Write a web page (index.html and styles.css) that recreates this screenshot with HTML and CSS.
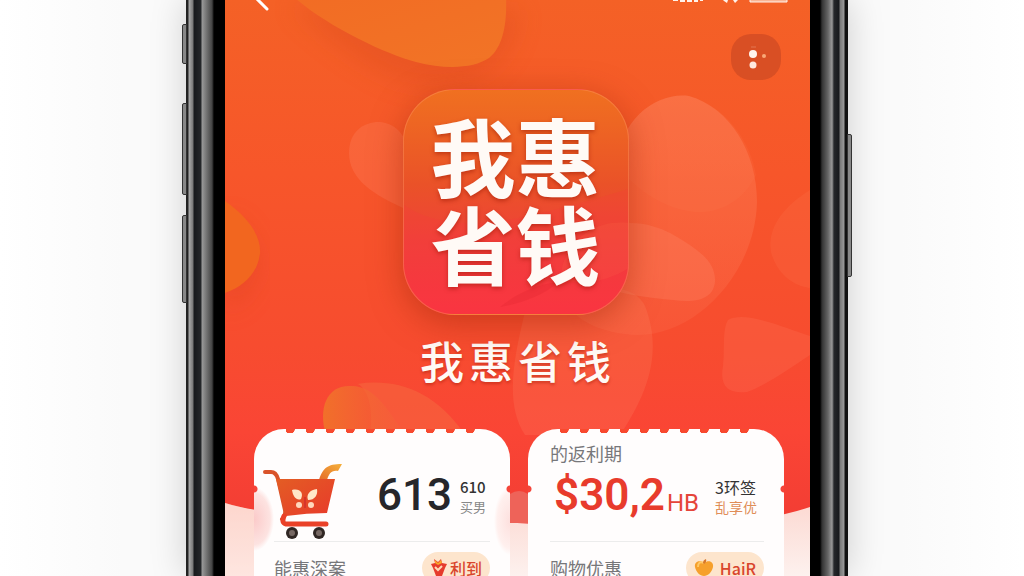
FILE: index.html
```html
<!DOCTYPE html>
<html lang="zh-CN">
<head>
	<meta charset="UTF-8" />
	<meta name="viewport" content="width=device-width, initial-scale=1.0" />
	<title>我惠省钱</title>
	<link rel="stylesheet" href="styles.css">
</head>
<body>
	<div class="phone">
		<span class="key key-mute"></span>
		<span class="key key-up"></span>
		<span class="key key-down"></span>
		<span class="key key-power"></span>

		<main class="screen">
			<!-- Background shapes -->
			<svg class="backdrop" viewBox="0 0 585 576" preserveAspectRatio="xMidYMin slice" aria-hidden="true">
				<defs>
					<linearGradient id="gold" x1="0" y1="0" x2="1" y2="1">
						<stop offset="0" stop-color="#f26c24" />
						<stop offset="1" stop-color="#f27426" />
					</linearGradient>
					<linearGradient id="haze" x1="0" y1="0" x2="0" y2="1">
						<stop offset="0" stop-color="#ff8a66" stop-opacity=".4" />
						<stop offset="1" stop-color="#ff8a66" stop-opacity=".14" />
					</linearGradient>
					<linearGradient id="fade" x1="0" y1="0" x2="1" y2="0">
						<stop offset="0" stop-color="#f1702a" />
						<stop offset="1" stop-color="#f4603a" stop-opacity=".4" />
					</linearGradient>
					<linearGradient id="foot" x1="0" y1="0" x2="0" y2="1">
						<stop offset="0" stop-color="#fcd9d2" />
						<stop offset="1" stop-color="#fdf1ee" />
					</linearGradient>
					<filter id="soft" x="-30%" y="-30%" width="160%" height="160%">
						<feGaussianBlur stdDeviation="12" />
					</filter>
				</defs>
				<path d="M66 6C130 62 170 90 215 86C262 84 290 60 294 10Z" fill="#d8481e" opacity=".35" filter="url(#soft)" />
				<path d="M70 -2C102 26 160 54 191 62C222 70 249 68 264 58C279 46 282 20 281 -2Z" fill="url(#gold)" />
				<path d="M0 215C40 235 50 285 0 312Z" fill="#d8401e" opacity=".35" filter="url(#soft)" />
				<path d="M0 201C24 218 36 236 35 253C33 272 20 286 0 293Z" fill="#f2661f" />
				<path d="M178 208C150 195 124 180 124 153C124 132 138 122 154 122C172 123 184 138 184 160Z" fill="#ff8a6a" opacity=".25" />
				<path d="M391 165C396 118 432 92 464 96C505 108 532 152 532 202C530 275 470 335 413 335C380 334 350 322 340 300Z" fill="url(#haze)" />
				<path d="M391 165C396 118 432 92 464 96C500 106 525 140 531 175C515 206 490 213 470 212C430 208 404 180 391 165Z" fill="#ff8058" opacity=".14" />
				<path d="M365 235C395 215 428 224 445 233C475 250 491 262 490 282C488 300 470 303 448 300C420 298 390 292 365 285Z" fill="#ff9070" opacity=".26" />
				<path d="M300 312C320 294 402 270 420 306C437 350 425 390 395 435L300 435C280 405 288 360 300 312Z" fill="#ff9a78" opacity=".17" />
				<path d="M585 190C556 208 542 230 546 252C552 274 568 286 585 288Z" fill="#ff7850" opacity=".2" />
				<path d="M503 320C520 310 560 328 585 336V355C565 368 540 386 522 392C505 394 494 388 498 366C500 350 497 330 503 320Z" fill="#ff7a5c" opacity=".24" />
				<path d="M145 435C150 400 138 385 132 384C170 378 210 390 240 435Z" fill="#f66c40" opacity=".5" />
				<path d="M101 435C93 408 102 386 124 386C150 384 164 412 180 435Z" fill="url(#fade)" />
				<path d="M0 503Q70 524 292 523Q500 536 585 507V576H0Z" fill="url(#foot)" />
				<path d="M285 494Q294 488 303 494V523H285Z" fill="#ee6359" />
				<path d="M0 503V576H34V512Z" fill="#ffd0c6" opacity=".35" />
			</svg>

			<header class="topbar">
				<a class="back" href="#" aria-label="返回">
					<svg width="20" height="12" viewBox="0 0 20 12"><path d="M5 -2L16 9" fill="none" stroke="#fff" stroke-width="3" stroke-linecap="round" /></svg>
				</a>
				<div class="tools">
					<svg class="status" width="116" height="5" viewBox="0 0 116 5" aria-hidden="true">
						<path d="M1 0H6V1H1ZM8 0H13V2H8ZM15 0H20V2H15ZM22 0H26V2H22ZM28 0H31V1H28ZM51 0H56L55 3L52 1ZM61 0H66L63 3Z" fill="#fff2ea" />
						<path d="M78 -4V2H115V-4" fill="#f9b595" stroke="#fff2ea" stroke-width="1" />
					</svg>
					<button class="more" type="button" aria-label="更多">
						<svg width="50" height="46" viewBox="0 0 50 46">
							<circle cx="22" cy="20" r="4" fill="#fff5ee" />
							<circle cx="22" cy="31" r="3.5" fill="#ffe9de" />
							<circle cx="33" cy="22" r="2" fill="#f9a878" />
							<path d="M20 13H25" stroke="#e27650" />
						</svg>
					</button>
				</div>
			</header>

			<section class="brand">
				<div class="logo">
					<svg class="logo-art" viewBox="0 0 226 226" aria-hidden="true">
						<path d="M0 116C50 150 120 132 226 100V226H0Z" fill="#ff3048" opacity=".14" />
						<path d="M226 134C190 130 160 155 158 190C180 200 210 190 226 180Z" fill="#ff7650" opacity=".14" />
						<path d="M97 219C115 204 135 196 155 194C145 205 120 215 97 219Z" fill="#d91f2b" opacity=".22" />
					</svg>
					<span>我惠</span>
					<span>省钱</span>
				</div>
				<h1 class="name"><span>我</span><span>惠</span><span>省</span><span>钱</span></h1>
			</section>

			<section class="coupons">
				<article class="coupon">
					<div class="coupon-main">
						<svg class="cart" width="82" height="80" viewBox="0 0 82 80" aria-hidden="true">
							<defs>
								<linearGradient id="basket" x1="0" y1="0" x2="1" y2="1">
									<stop offset="0" stop-color="#e35d24" />
									<stop offset="1" stop-color="#e83a2b" />
								</linearGradient>
								<linearGradient id="handle" x1="0" y1="1" x2="1" y2="0">
									<stop offset="0" stop-color="#e56b27" />
									<stop offset="1" stop-color="#f5b13c" />
								</linearGradient>
							</defs>
							<path d="M57 18C61 6 65 2 80 2L76 9C69 8 67 12 65 18Z" fill="url(#handle)" />
							<path d="M3 10H9Q14 10 16 17L23 48Q24 54 20 57" fill="none" stroke="#d9532a" stroke-width="4" stroke-linecap="round" />
							<path d="M14 17H73L65 51Q45 51 24 54Z" fill="url(#basket)" />
							<path d="M22 54Q19 61 24 62H64" fill="none" stroke="#ea4128" stroke-width="5" stroke-linecap="round" />
							<path d="M30 28C38 26 42 31 39 37C35 39 31 35 30 28ZM55 27C48 28 44 32 46 38C53 38 56 33 55 27Z" fill="#ffe8c8" />
							<circle cx="37" cy="43" r="3" fill="#ffd8bd" />
							<circle cx="49" cy="43" r="3" fill="#ffd8bd" />
							<path d="M43 35V46" stroke="#d8342a" stroke-width="2" />
							<circle cx="30" cy="71" r="6" fill="#302724" />
							<circle cx="30" cy="71" r="3" fill="#766863" />
							<circle cx="57" cy="71" r="6" fill="#302724" />
							<circle cx="57" cy="71" r="3" fill="#766863" />
						</svg>
						<strong class="amount">613</strong>
						<p class="note"><b>610</b><small>买男</small></p>
					</div>
					<div class="coupon-foot">
						<span class="label">能惠深案</span>
						<a class="pill" href="#">
							<svg width="18" height="18" viewBox="0 0 18 18" aria-hidden="true">
								<path d="M1 5L5 4L4 0L8 3L11 0L12 4L17 5L15 9L12 17H6L3 9Z" fill="#e63b2c" />
								<path d="M5 1L8 4L11 1L12 4L8 6L5 4Z" fill="#f7a62b" />
								<path d="M5 8L8 11L12 7" fill="none" stroke="#ffd9b5" stroke-width="2" />
							</svg>
							利到
						</a>
					</div>
				</article>

				<article class="coupon coupon-cash">
					<h2 class="label">的返利期</h2>
					<div class="coupon-main">
						<strong class="amount red">$30,2</strong>
						<span class="unit">HB</span>
						<p class="note warm"><b>3环签</b><small>乱享优</small></p>
					</div>
					<div class="coupon-foot">
						<span class="label">购物优惠</span>
						<a class="pill wide" href="#">
							<svg width="20" height="18" viewBox="0 0 20 18" aria-hidden="true">
								<path d="M10 4C15 0 20 3 19 8C18 13 14 17 10 17C6 17 2 13 1 8C0 3 5 0 10 4Z" fill="#f6a02c" />
								<path d="M10 4C6 2 4 4 4 8" fill="none" stroke="#ffc966" stroke-width="2" />
								<path d="M9 4Q9 1 12 0Q13 3 10 5Z" fill="#d9792a" />
							</svg>
							HaiR
						</a>
					</div>
				</article>
			</section>
		</main>
	</div>
</body>
</html>
```

FILE: styles.css
```css
* {
	box-sizing: border-box;
}
body {
	margin: 0;
	padding-left: 10px;
	height: 100vh;
	overflow: hidden;
	background: linear-gradient(90deg, #fff, #fafafa 12%, #fafafa 88%, #fff);
	font-family: "Noto Sans CJK SC", "Noto Sans", sans-serif;
}
h1,
h2,
p {
	margin: 0;
}
a {
	text-decoration: none;
}

/* Phone body */
.phone {
	position: relative;
	max-width: 662px;
	min-height: 100vh;
	margin: 0 auto;
	padding: 0 38px 0 39px;
	background:
		linear-gradient(90deg, #222 0 2px, #aaa 3px, #777 7px, #17191c 8px, #25272a 15px, #999 16px, #777 20px, #444 26px, #000 28px 100%) left / 39px 100% no-repeat,
		linear-gradient(270deg, #111 0 3px, #999 4px, #777 8px, #17191c 9px, #25272a 14px, #999 16px, #666 20px, #333 26px, #000 28px 100%) right / 39px 100% no-repeat;
	box-shadow: 0 0 34px rgba(0, 0, 0, 0.18);
}
.key {
	position: absolute;
	left: -4px;
	width: 5px;
	border: 1px solid #333;
	border-radius: 2px 0 0 2px;
	background: #888;
}
.key-mute {
	top: 24px;
	height: 40px;
}
.key-up {
	top: 103px;
	height: 92px;
}
.key-down {
	top: 215px;
	height: 88px;
}
.key-power {
	top: 134px;
	left: auto;
	right: -4px;
	height: 143px;
	border-radius: 0 2px 2px 0;
}

/* Screen */
.screen {
	position: relative;
	height: 100vh;
	overflow: hidden;
	background: linear-gradient(#f46126, #f7562a 30%, #f74c2f 60%, #fa4535 75%, #ee3833);
}
.backdrop {
	position: absolute;
	top: 0;
	left: 0;
	width: 100%;
	height: 576px;
}
.topbar,
.brand,
.coupons {
	position: relative;
}
.topbar {
	display: flex;
	justify-content: space-between;
	height: 89px;
	padding: 0 22px 0 26px;
}
.back {
	height: 12px;
	line-height: 0;
}
.tools {
	display: flex;
	flex-direction: column;
	align-items: flex-end;
	gap: 29px;
}
.more {
	width: 50px;
	height: 46px;
	margin-right: 7px;
	padding: 0;
	border: none;
	border-radius: 20px;
	background: #d94f24;
	cursor: pointer;
}

/* Logo and name */
.brand {
	display: flex;
	flex-direction: column;
	align-items: center;
	gap: 13px;
	height: 340px;
	padding-right: 4px;
	color: #fffaf6;
}
.logo {
	position: relative;
	display: flex;
	flex-direction: column;
	align-items: center;
	width: 226px;
	height: 226px;
	padding-top: 20px;
	overflow: hidden;
	border: 1px solid rgba(255, 150, 100, 0.4);
	border-radius: 52px;
	background: linear-gradient(#f07020, #ea5228 42%, #f0403a 70%, #f93540);
	box-shadow: 0 8px 32px rgba(160, 40, 10, 0.5);
	font-size: 85px;
	font-weight: 700;
	line-height: 88px;
	text-shadow: 0 2px 4px rgba(150, 20, 0, 0.5);
}
.logo span {
	position: relative;
}
.logo-art {
	position: absolute;
	top: 0;
	left: 0;
	width: 100%;
}
.name {
	display: flex;
	gap: 5px;
	font-size: 44px;
	font-weight: 500;
	line-height: 64px;
	text-shadow: 0 2px 3px rgba(150, 20, 0, 0.4);
}

/* Coupons */
.coupons {
	display: grid;
	grid-template-columns: 1fr 1fr;
	gap: 18px;
	padding: 0 26px 0 29px;
}
.coupon {
	position: relative;
	height: 190px;
	padding: 0 20px;
	border-radius: 30px;
	white-space: nowrap;
	background:
		radial-gradient(circle at 0 60px, #f5453a 3px, transparent 4px),
		radial-gradient(circle at 100% 60px, #f5453a 3px, transparent 4px),
		radial-gradient(ellipse 20px 32px at 0 90px, #fbcac9, #fde3e1 80%, transparent),
		radial-gradient(ellipse 16px 34px at 100% 92px, #fde0de, #fff0ee 80%, transparent),
		#fffdfd;
}
.coupon-cash {
	padding: 0 20px 0 22px;
	background:
		radial-gradient(circle at 0 60px, #f5453a 3px, transparent 4px),
		radial-gradient(circle at 100% 60px, #f5453a 3px, transparent 4px),
		#fffdfd;
}
/* perforated top edge */
.coupon::before {
	content: "";
	position: absolute;
	top: 0;
	left: 32px;
	right: 24px;
	height: 4px;
	background: radial-gradient(ellipse 5px 5px at 4px 0, #f8492f 90%, transparent) 0 0 / 20px 4px repeat-x;
}
.coupon-main {
	display: flex;
	justify-content: flex-end;
	align-items: center;
	height: 113px;
	padding-top: 20px;
	border-bottom: 1px solid #ececec;
}
.cart {
	margin: 14px auto 0 -12px;
}
.amount {
	color: #26262a;
	font-family: Roboto, sans-serif;
	font-size: 44px;
	font-weight: 500;
	line-height: 48px;
}
.amount.red {
	margin-left: 4px;
	color: #e83b2c;
	font-weight: 600;
}
.unit {
	margin: 16px auto 0 2px;
	color: #e5453a;
	font-family: Roboto, sans-serif;
	font-size: 24px;
	line-height: 24px;
}
.note {
	display: flex;
	flex-direction: column;
	margin: 4px 4px 0 8px;
	color: #333;
	line-height: 20px;
}
.note b {
	font-size: 15px;
	font-weight: 500;
}
.note small {
	color: #888;
	font-size: 13px;
}
.note.warm {
	margin-right: 7px;
}
.note.warm b {
	font-size: 16px;
	font-weight: 400;
}
.note.warm small {
	color: #e08d58;
	font-size: 14px;
}
.coupon-foot {
	display: flex;
	justify-content: space-between;
	align-items: flex-start;
	padding-top: 10px;
}
.label {
	color: #77777a;
	font-size: 18px;
	font-weight: 400;
	line-height: 32px;
}
.coupon-cash > .label {
	position: absolute;
	top: 8px;
}
.pill {
	display: flex;
	align-items: center;
	gap: 2px;
	height: 32px;
	padding: 0 8px;
	border-radius: 16px;
	background: #fde5cd;
	color: #d9462c;
	font-size: 16px;
	font-weight: 500;
	line-height: 28px;
}
.pill.wide {
	gap: 6px;
}
```
